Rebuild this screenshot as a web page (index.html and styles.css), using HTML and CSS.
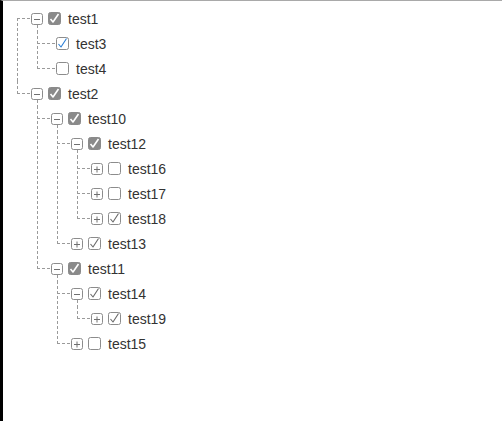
FILE: index.html
```html
<!DOCTYPE html>
<html>
<head>
<meta charset="utf-8">
<link rel="stylesheet" href="styles.css">
</head>
<body>
<div class="frame">
  <ul class="tree root">
    <li class="node">
      <div class="row open">
        <span class="conn"></span>
        <svg class="exp" viewBox="0 0 12 12"><rect x=".5" y=".5" width="11" height="11" rx="2"/><path d="M3 6.5H9"/></svg>
        <svg class="cb full" viewBox="0 0 13 13"><rect x=".5" y=".5" width="12" height="12" rx="2"/><path d="M2.5 7L5 10L10.5 2"/></svg>
        <span class="label">test1</span>
      </div>
      <ul class="tree">
        <li class="node">
          <div class="row">
            <span class="conn leaf"></span>
            <svg class="cb tick blue" viewBox="0 0 13 13"><rect x=".5" y=".5" width="12" height="12" rx="2"/><path d="M2.5 7L5 10L10.5 1.5"/></svg>
            <span class="label">test3</span>
          </div>
        </li>
        <li class="node">
          <div class="row">
            <span class="conn leaf"></span>
            <svg class="cb" viewBox="0 0 13 13"><rect x=".5" y=".5" width="12" height="12" rx="2"/></svg>
            <span class="label">test4</span>
          </div>
        </li>
      </ul>
    </li>
    <li class="node">
      <div class="row open">
        <span class="conn"></span>
        <svg class="exp" viewBox="0 0 12 12"><rect x=".5" y=".5" width="11" height="11" rx="2"/><path d="M3 6.5H9"/></svg>
        <svg class="cb full" viewBox="0 0 13 13"><rect x=".5" y=".5" width="12" height="12" rx="2"/><path d="M2.5 7L5 10L10.5 2"/></svg>
        <span class="label">test2</span>
      </div>
      <ul class="tree">
        <li class="node">
          <div class="row open">
            <span class="conn"></span>
            <svg class="exp" viewBox="0 0 12 12"><rect x=".5" y=".5" width="11" height="11" rx="2"/><path d="M3 6.5H9"/></svg>
            <svg class="cb full" viewBox="0 0 13 13"><rect x=".5" y=".5" width="12" height="12" rx="2"/><path d="M2.5 7L5 10L10.5 2"/></svg>
            <span class="label">test10</span>
          </div>
          <ul class="tree">
            <li class="node">
              <div class="row open">
                <span class="conn"></span>
                <svg class="exp" viewBox="0 0 12 12"><rect x=".5" y=".5" width="11" height="11" rx="2"/><path d="M3 6.5H9"/></svg>
                <svg class="cb full" viewBox="0 0 13 13"><rect x=".5" y=".5" width="12" height="12" rx="2"/><path d="M2.5 7L5 10L10.5 2"/></svg>
                <span class="label">test12</span>
              </div>
              <ul class="tree">
                <li class="node">
                  <div class="row">
                    <span class="conn"></span>
                    <svg class="exp" viewBox="0 0 12 12"><rect x=".5" y=".5" width="11" height="11" rx="2"/><path d="M3 6.5H9M6 3.5V9.5"/></svg>
                    <svg class="cb" viewBox="0 0 13 13"><rect x=".5" y=".5" width="12" height="12" rx="2"/></svg>
                    <span class="label">test16</span>
                  </div>
                </li>
                <li class="node">
                  <div class="row">
                    <span class="conn"></span>
                    <svg class="exp" viewBox="0 0 12 12"><rect x=".5" y=".5" width="11" height="11" rx="2"/><path d="M3 6.5H9M6 3.5V9.5"/></svg>
                    <svg class="cb" viewBox="0 0 13 13"><rect x=".5" y=".5" width="12" height="12" rx="2"/></svg>
                    <span class="label">test17</span>
                  </div>
                </li>
                <li class="node">
                  <div class="row">
                    <span class="conn"></span>
                    <svg class="exp" viewBox="0 0 12 12"><rect x=".5" y=".5" width="11" height="11" rx="2"/><path d="M3 6.5H9M6 3.5V9.5"/></svg>
                    <svg class="cb tick" viewBox="0 0 13 13"><rect x=".5" y=".5" width="12" height="12" rx="2"/><path d="M2.5 7L5 10L10.5 1.5"/></svg>
                    <span class="label">test18</span>
                  </div>
                </li>
              </ul>
            </li>
            <li class="node">
              <div class="row">
                <span class="conn"></span>
                <svg class="exp" viewBox="0 0 12 12"><rect x=".5" y=".5" width="11" height="11" rx="2"/><path d="M3 6.5H9M6 3.5V9.5"/></svg>
                <svg class="cb tick" viewBox="0 0 13 13"><rect x=".5" y=".5" width="12" height="12" rx="2"/><path d="M2.5 7L5 10L10.5 1.5"/></svg>
                <span class="label">test13</span>
              </div>
            </li>
          </ul>
        </li>
        <li class="node">
          <div class="row open">
            <span class="conn"></span>
            <svg class="exp" viewBox="0 0 12 12"><rect x=".5" y=".5" width="11" height="11" rx="2"/><path d="M3 6.5H9"/></svg>
            <svg class="cb full" viewBox="0 0 13 13"><rect x=".5" y=".5" width="12" height="12" rx="2"/><path d="M2.5 7L5 10L10.5 2"/></svg>
            <span class="label">test11</span>
          </div>
          <ul class="tree">
            <li class="node">
              <div class="row open">
                <span class="conn"></span>
                <svg class="exp" viewBox="0 0 12 12"><rect x=".5" y=".5" width="11" height="11" rx="2"/><path d="M3 6.5H9"/></svg>
                <svg class="cb tick" viewBox="0 0 13 13"><rect x=".5" y=".5" width="12" height="12" rx="2"/><path d="M2.5 7L5 10L10.5 1.5"/></svg>
                <span class="label">test14</span>
              </div>
              <ul class="tree">
                <li class="node">
                  <div class="row">
                    <span class="conn"></span>
                    <svg class="exp" viewBox="0 0 12 12"><rect x=".5" y=".5" width="11" height="11" rx="2"/><path d="M3 6.5H9M6 3.5V9.5"/></svg>
                    <svg class="cb tick" viewBox="0 0 13 13"><rect x=".5" y=".5" width="12" height="12" rx="2"/><path d="M2.5 7L5 10L10.5 1.5"/></svg>
                    <span class="label">test19</span>
                  </div>
                </li>
              </ul>
            </li>
            <li class="node">
              <div class="row">
                <span class="conn"></span>
                <svg class="exp" viewBox="0 0 12 12"><rect x=".5" y=".5" width="11" height="11" rx="2"/><path d="M3 6.5H9M6 3.5V9.5"/></svg>
                <svg class="cb" viewBox="0 0 13 13"><rect x=".5" y=".5" width="12" height="12" rx="2"/></svg>
                <span class="label">test15</span>
              </div>
            </li>
          </ul>
        </li>
      </ul>
    </li>
  </ul>
</div>
</body>
</html>
```
FILE: styles.css
```css
html, body {
  margin: 0;
  height: 100%;
}

body {
  background: #fff;
  font-family: "Liberation Sans", Arial, sans-serif;
}

.frame {
  height: 100%;
  box-sizing: border-box;
  border-left: 3px solid #000;
  border-top: 1px solid #a9a9a9;
  padding: 5px 0 0 14px;
}

.tree {
  list-style: none;
  margin: 0;
  padding: 0;
}

.tree .tree {
  margin-left: 20px;
}

.node {
  background: repeating-linear-gradient(to bottom, #9a9a9a 0 3px, transparent 3px 5px) 0 0 / 1px 100% no-repeat;
}

.node:last-child {
  background-size: 1px 13px;
}

.root > .node:first-child {
  background-position: 0 12px;
  background-size: 1px calc(100% - 12px);
}

.row {
  display: flex;
  align-items: center;
  height: 25px;
}

.row.open {
  background: repeating-linear-gradient(to bottom, #9a9a9a 0 3px, transparent 3px 5px) 20px 19px / 1px 6px no-repeat;
}

.conn {
  width: 14px;
  height: 1px;
  flex: none;
  background: repeating-linear-gradient(to right, #9a9a9a 0 3px, transparent 3px 5px);
}

.conn.leaf {
  width: 19px;
}

.exp {
  display: block;
  width: 12px;
  height: 12px;
  flex: none;
  margin-right: 5px;
}

.exp rect {
  fill: #fff;
  stroke: #8c8c8c;
  stroke-width: 1;
}

.exp path {
  fill: none;
  stroke: #707070;
  stroke-width: 1;
}

.cb {
  display: block;
  width: 13px;
  height: 13px;
  flex: none;
  margin-right: 7px;
}

.cb rect {
  fill: #fff;
  stroke: #8c8c8c;
  stroke-width: 1;
}

.cb path {
  fill: none;
  stroke: #6a6a6a;
  stroke-width: 1.1;
  stroke-linejoin: round;
}

.cb.blue path {
  stroke: #2b7fd6;
}

.cb.full rect {
  fill: #8a8a8a;
  stroke: #8a8a8a;
}

.cb.full path {
  stroke: #fff;
  stroke-width: 1.6;
}

.label {
  font-size: 14px;
  color: #333;
  white-space: nowrap;
}
```
